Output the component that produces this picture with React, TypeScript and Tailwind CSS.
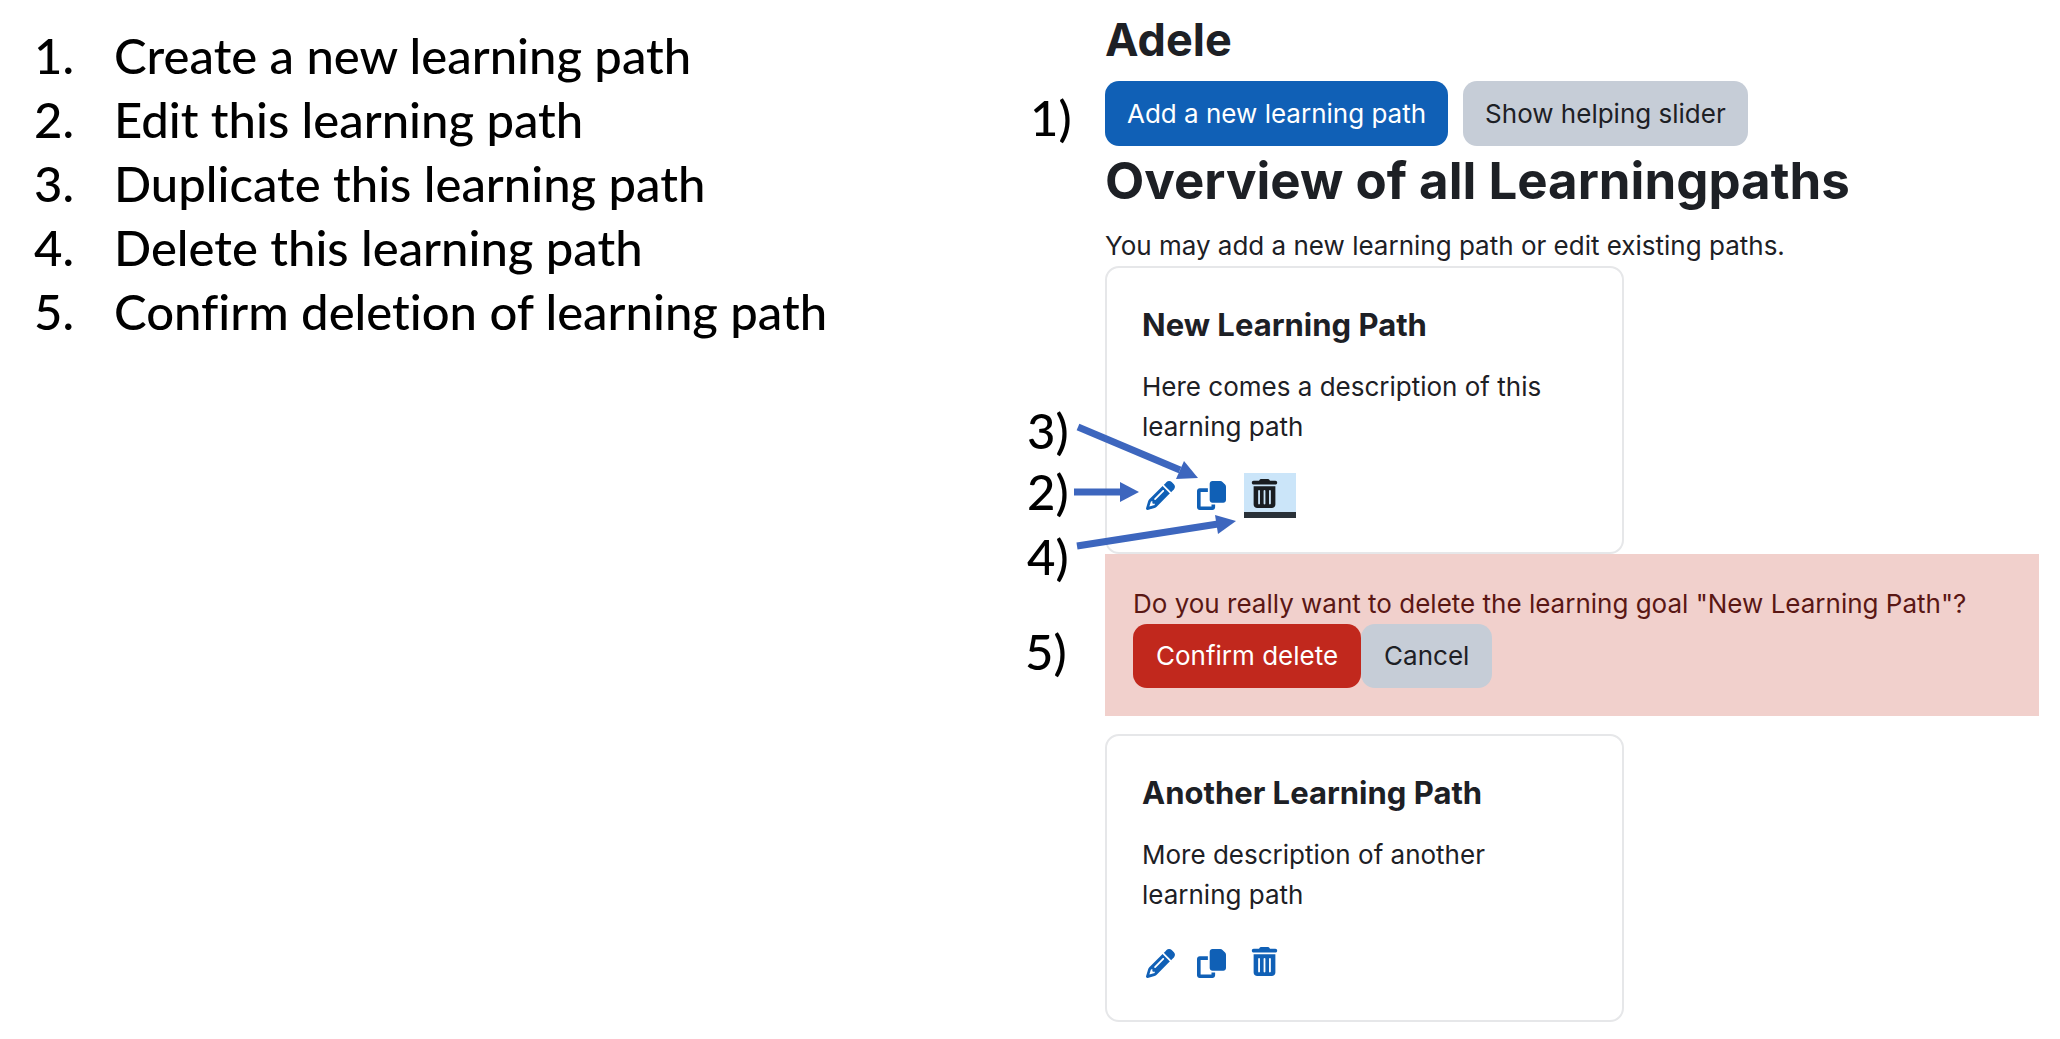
import type { ReactNode } from "react";
import { FaPencil, FaTrashCan } from "react-icons/fa6";

const steps = [
  "Create a new learning path",
  "Edit this learning path",
  "Duplicate this learning path",
  "Delete this learning path",
  "Confirm deletion of learning path",
];

function CopyIcon() {
  return (
    <svg viewBox="0 0 512 512" className="size-[29px]" fill="currentColor" aria-hidden="true">
      <path d="M272 0H410c16 0 30 6 40 16l46 46c10 10 16 24 16 40V336c0 26.5-21.5 48-48 48H272c-26.5 0-48-21.5-48-48V48c0-26.5 21.5-48 48-48zM48 128H192v64H64V448H256V416h64v48c0 26.5-21.5 48-48 48H48c-26.5 0-48-21.5-48-48V176c0-26.5 21.5-48 48-48z" />
    </svg>
  );
}

function Callout({ n, className }: { n: number; className: string }) {
  return (
    <span
      className={`absolute text-[49px] leading-[64px] font-medium text-black font-[Lato,sans-serif] ${className}`}
    >
      {n})
    </span>
  );
}

function Arrows() {
  return (
    <svg
      className="absolute top-[137px] -left-[40px] z-10 h-[150px] w-[180px] pointer-events-none"
      viewBox="0 0 180 150"
      fill="#3d66be"
      stroke="#3d66be"
      aria-hidden="true"
    >
      <path d="M11 22 L113 65" strokeWidth="7" />
      <path d="M131 73 L117 56 L109 74 Z" stroke="none" />
      <path d="M7 87 H54" strokeWidth="7" />
      <path d="M72 87 L53 77 V97 Z" stroke="none" />
      <path d="M10 141 L151 119" strokeWidth="7" />
      <path d="M169 116 L148 110 L151 129 Z" stroke="none" />
    </svg>
  );
}

function PathCard({
  title,
  text,
  deleting = false,
  children,
}: {
  title: string;
  text: string;
  deleting?: boolean;
  children?: ReactNode;
}) {
  return (
    <article className="relative w-[519px] max-w-full rounded-[14px] border-2 border-[#e6e7e9] px-[35px] pt-[35px] pb-[34px]">
      <h3 className="text-[31px] leading-[44px] font-bold">{title}</h3>
      <p className="mt-5 max-w-[420px] text-[26px] leading-[40px]">{text}</p>
      <div className="mt-[26px] flex h-[45px] items-center text-[29px] text-[#1060b6]">
        <button type="button" aria-label={`Edit ${title}`} className="ml-1 w-[51px]">
          <FaPencil />
        </button>
        <button type="button" aria-label={`Duplicate ${title}`} className="w-[47px]">
          <CopyIcon />
        </button>
        <button
          type="button"
          aria-label={`Delete ${title}`}
          className={
            deleting
              ? "h-[45px] w-[52px] border-b-6 border-[#2a3138] bg-[#cbe5f9] pt-[6px] pl-[6px] pb-1 text-[#1a1d21]"
              : "h-[45px] w-[52px] border-b-6 border-transparent pt-[6px] pl-[6px] pb-1"
          }
        >
          <FaTrashCan />
        </button>
      </div>
      {children}
    </article>
  );
}

export default function App() {
  return (
    <main className="grid grid-cols-[minmax(0,1105fr)_minmax(0,955fr)] bg-white">
      <ol className="pt-[23px] pl-[34px] text-[49px] leading-[64px] font-medium text-black font-[Lato,sans-serif] [font-variant-ligatures:none]">
        {steps.map((step, i) => (
          <li key={step} className="flex">
            <span className="w-20 shrink-0">{i + 1}.</span>
            <span>{step}</span>
          </li>
        ))}
      </ol>

      <section className="pt-[14px] pr-[21px] text-[#1d2025] font-[Inter,sans-serif]">
        <h2 className="text-[45px] leading-[52px] font-bold">Adele</h2>
        <div className="relative mt-[15px] flex gap-[15px] text-[26px]">
          <Callout n={1} className="top-1 -left-[75px]" />
          <button type="button" className="h-[65px] rounded-[14px] bg-[#1060b6] px-[22px] text-white">
            Add a new learning path
          </button>
          <button type="button" className="h-[65px] rounded-[14px] bg-[#c6cdd7] px-[22px]">
            Show helping slider
          </button>
        </div>
        <h1 className="mt-[3px] text-[51px] leading-[64px] font-bold">Overview of all Learningpaths</h1>
        <p className="mt-[13px] text-[26px] leading-[40px]">
          You may add a new learning path or edit existing paths.
        </p>

        <PathCard title="New Learning Path" text="Here comes a description of this learning path" deleting>
          <Callout n={3} className="top-[130px] -left-[80px]" />
          <Callout n={2} className="top-[191px] -left-[80px]" />
          <Callout n={4} className="top-[256px] -left-[80px]" />
          <Arrows />
        </PathCard>

        <div
          role="alert"
          className="relative bg-[#f1d0cc] px-7 pt-[30px] pb-7 text-[26px] leading-[40px] text-[#5a1714]"
        >
          <Callout n={5} className="top-[65px] -left-[80px]" />
          <p>Do you really want to delete the learning goal "New Learning Path"?</p>
          <div className="flex">
            <button type="button" className="h-16 rounded-[14px] bg-[#c1281d] px-[23px] text-white">
              Confirm delete
            </button>
            <button type="button" className="h-16 rounded-[14px] bg-[#c6cdd7] px-[23px] text-[#1d2025]">
              Cancel
            </button>
          </div>
        </div>

        <div className="mt-[18px]">
          <PathCard title="Another Learning Path" text="More description of another learning path" />
        </div>
      </section>
    </main>
  );
}
